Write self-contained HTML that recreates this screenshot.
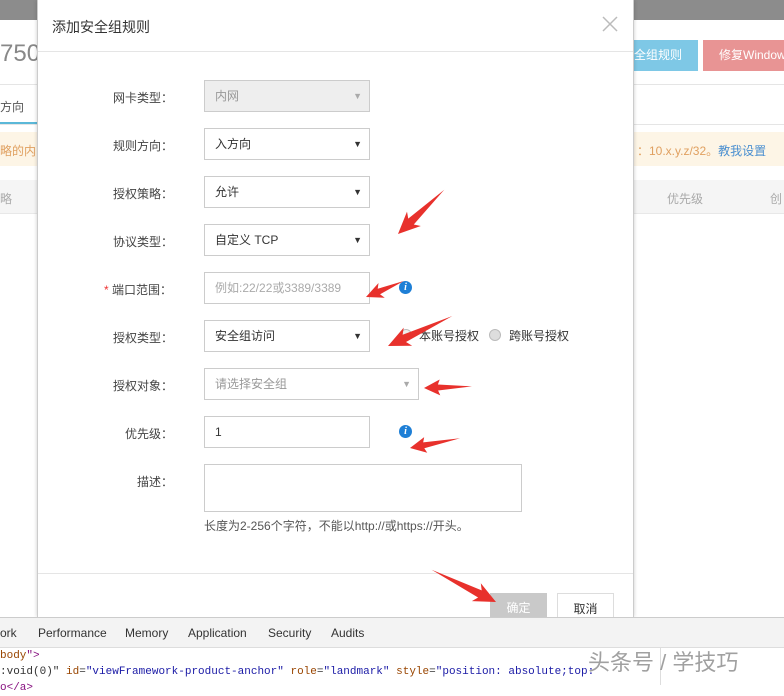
<!DOCTYPE html>
<html><head><meta charset="utf-8"><style>
*{margin:0;padding:0;box-sizing:border-box}
body{width:784px;height:685px;overflow:hidden;position:relative;background:#fff;font-family:"Liberation Sans","Noto Sans CJK SC",sans-serif;font-size:12px;color:#333}
.a{position:absolute}
.lbl{position:absolute;text-align:left;font-size:12px;color:#444;white-space:nowrap}
.box{position:absolute;left:204px;width:166px;height:32px;border:1px solid #ccc;background:#fff;padding:0 10px;line-height:30px;font-size:12px;color:#333}
.box .ar{position:absolute;right:7px;top:0;font-size:9px;color:#333}
.info{position:absolute;width:13px;height:13px;border-radius:50%;background:#1e7fd6;color:#fff;font-size:10px;font-weight:bold;font-style:italic;text-align:center;line-height:13px;font-family:"Liberation Serif",serif}
</style></head><body>
<div class="a" style="left:0;top:0;width:784px;height:20px;background:#8c8c8c"></div>
<div class="a" style="left:0;top:40px;font-size:24px;color:#888">7506</div>
<div class="a" style="left:634px;top:40px;width:64px;height:31px;background:#7ec8e6;color:#fff;line-height:31px;font-size:12px">全组规则</div>
<div class="a" style="left:703px;top:40px;width:81px;height:31px;background:#e89494;color:#fff;line-height:31px;font-size:12px;padding-left:16px;white-space:nowrap">修复Windows</div>
<div class="a" style="left:0;top:84px;width:784px;height:1px;background:#e5e5e5"></div>
<div class="a" style="left:0;top:98px;color:#555">方向</div>
<div class="a" style="left:0;top:122px;width:37px;height:2px;background:#5bb8d8"></div>
<div class="a" style="left:0;top:124px;width:784px;height:1px;background:#e5e5e5"></div>
<div class="a" style="left:0;top:132px;width:784px;height:34px;background:#fdf5e6"></div>
<div class="a" style="left:0;top:142px;color:#e0a060">略的内</div>
<div class="a" style="left:637px;top:142px;color:#e0a060">：10.x.y.z/32。<span style="color:#4a8fd0">教我设置</span></div>
<div class="a" style="left:0;top:180px;width:784px;height:34px;background:#f5f5f5;border-bottom:1px solid #e8e8e8"></div>
<div class="a" style="left:0;top:190px;color:#aaa">略</div>
<div class="a" style="left:667px;top:190px;color:#aaa">优先级</div>
<div class="a" style="left:770px;top:190px;color:#aaa">创</div>

<div class="a" style="left:37px;top:0;width:597px;height:617px;background:#fff;border-left:1px solid #ccc;border-right:1px solid #ccc;box-shadow:0 0 4px rgba(0,0,0,.2)">
 <div class="a" style="left:14px;top:17px;font-size:14px;color:#333">添加安全组规则</div>
 <svg class="a" style="left:564px;top:16px" width="16" height="16"><path d="M1 1L15 15M15 1L1 15" stroke="#bbb" stroke-width="1.5"/></svg>
 <div class="a" style="left:0;top:51px;width:595px;height:1px;background:#e5e5e5"></div>
 <div class="a" style="left:0;top:573px;width:595px;height:1px;background:#e5e5e5"></div>
</div>
<div class="lbl" style="left:113px;top:89px">网卡类型：</div>
<div class="lbl" style="left:113px;top:137px">规则方向：</div>
<div class="lbl" style="left:113px;top:185px">授权策略：</div>
<div class="lbl" style="left:113px;top:233px">协议类型：</div>
<div class="lbl" style="left:104px;top:281px"><span style="color:#e33">*</span> 端口范围：</div>
<div class="lbl" style="left:113px;top:329px">授权类型：</div>
<div class="lbl" style="left:113px;top:377px">授权对象：</div>
<div class="lbl" style="left:125px;top:425px">优先级：</div>
<div class="lbl" style="left:137px;top:473px">描述：</div>

<div class="box" style="top:80px;background:#eee;color:#999">内网<span class="ar" style="color:#aaa">▼</span></div>
<div class="box" style="top:128px">入方向<span class="ar">▼</span></div>
<div class="box" style="top:176px">允许<span class="ar">▼</span></div>
<div class="box" style="top:224px">自定义 TCP<span class="ar">▼</span></div>
<div class="box" style="top:272px;color:#aaa">例如:22/22或3389/3389</div>
<div class="info" style="left:399px;top:281px">i</div>
<div class="box" style="top:320px">安全组访问<span class="ar">▼</span></div>
<div class="a" style="left:400px;top:329px;width:12px;height:12px;border-radius:50%;border:1px solid #bbb;background:#eee"></div>
<div class="a" style="left:419px;top:327px;font-size:12px">本账号授权</div>
<div class="a" style="left:489px;top:329px;width:12px;height:12px;border-radius:50%;border:1px solid #bbb;background:#ddd"></div>
<div class="a" style="left:509px;top:327px;font-size:12px">跨账号授权</div>
<div class="box" style="top:368px;width:215px;color:#999">请选择安全组<span class="ar" style="color:#aaa">▼</span></div>
<div class="box" style="top:416px">1</div>
<div class="info" style="left:399px;top:425px">i</div>
<div class="box" style="top:464px;width:318px;height:48px"></div>
<div class="a" style="left:204px;top:517px;font-size:12px;color:#555">长度为2-256个字符，不能以http://或https://开头。</div>

<div class="a" style="left:490px;top:593px;width:57px;height:30px;background:#c9c9c9;color:#fff;text-align:center;line-height:30px">确定</div>
<div class="a" style="left:557px;top:593px;width:57px;height:30px;border:1px solid #ddd;background:#fff;text-align:center;line-height:30px">取消</div>

<div class="a" style="left:0;top:617px;width:784px;height:68px;background:#fff;border-top:1px solid #ccc"></div>
<div class="a" style="left:0;top:618px;width:784px;height:30px;background:#f3f3f3;border-bottom:1px solid #ddd;font-size:12px;color:#333;line-height:30px;white-space:nowrap">
<span style="position:absolute;left:0">ork</span><span style="position:absolute;left:38px">Performance</span><span style="position:absolute;left:125px">Memory</span><span style="position:absolute;left:188px">Application</span><span style="position:absolute;left:268px">Security</span><span style="position:absolute;left:331px">Audits</span></div>
<div class="a" style="left:660px;top:648px;width:1px;height:37px;background:#ddd"></div>
<div class="a" style="left:0;top:648px;font-family:'Liberation Mono',monospace;font-size:11px;line-height:16px;white-space:nowrap;color:#881280">
<div><span style="color:#994500">body</span>"&gt;</div>
<div style="color:#333">:void(0)" <span style="color:#994500">id</span>=<span style="color:#1a1aa6">"viewFramework-product-anchor"</span> <span style="color:#994500">role</span>=<span style="color:#1a1aa6">"landmark"</span> <span style="color:#994500">style</span>=<span style="color:#1a1aa6">"position: absolute;top:</span></div>
<div>o&lt;/a&gt;</div></div>
<div class="a" style="left:588px;top:645px;font-size:22px;color:rgba(120,120,120,.7)">头条号 / 学技巧</div>

<svg class="a" style="left:0;top:0" width="784" height="685">
<g fill="#e8312c">
<polygon transform="translate(398,234) rotate(136.3)" points="-64,0 -18,-4 -22,-10 0,0 -22,10 -18,4"/>
<polygon transform="translate(366,297) rotate(157)" points="-41,0 -14,-3 -17,-8 0,0 -17,8 -14,3"/>
<polygon transform="translate(388,346) rotate(155)" points="-71,0 -18,-4 -22,-10 0,0 -22,10 -18,4"/>
<polygon transform="translate(424,388) rotate(178)" points="-48,0 -14,-3 -16,-8 0,0 -16,8 -14,3"/>
<polygon transform="translate(410,448) rotate(169)" points="-51,0 -14,-3 -16,-8 0,0 -16,8 -14,3"/>
<polygon transform="translate(496,602) rotate(26.6)" points="-72,0 -18,-4 -22,-10 0,0 -22,10 -18,4"/>
</g></svg>
</body></html>
